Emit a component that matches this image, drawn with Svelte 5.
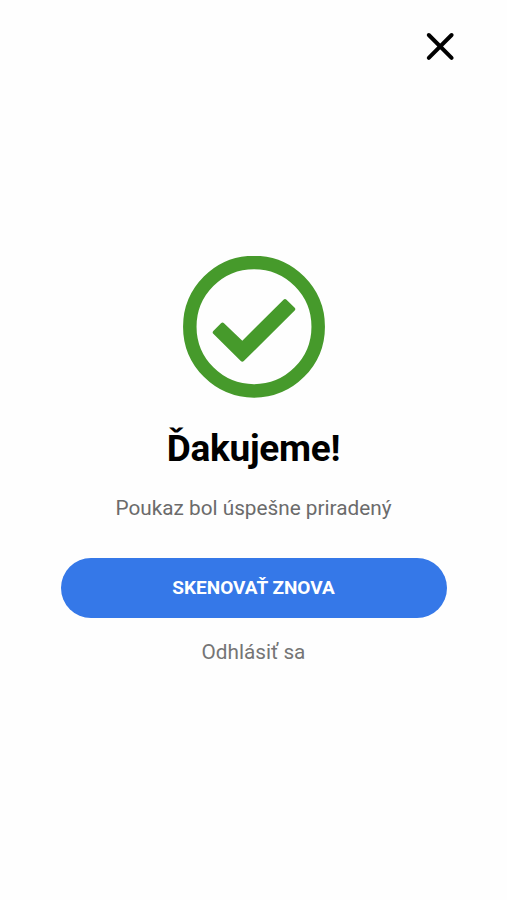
<script>
  export let onClose = () => {}
  export let onScan = () => {}
  export let onLogout = () => {}
</script>

<main>
  <header>
    <button class="close" title="Zavrieť" on:click={onClose}>
      <svg viewBox="0 0 28 28" width="28" height="28">
        <path d="M2.800 3 25.600 25.800M25.600 3 2.800 25.800" />
      </svg>
    </button>
  </header>

  <section>
    <svg class="check" viewBox="0 0 142 142" width="142" height="142">
      <circle cx="71" cy="70.700" r="64.2" />
      <path
        d="M30.300 75 38 67.200Q39.500 65.700 41 67.200L59.300 84.700 100.500 43.800Q102 42.300 103.500 43.800L111.700 51.700Q113 53 111.700 54.500L60.800 105Q59.300 106.300 57.800 105L30.300 77.800Q29 76.400 30.300 75Z"
      />
    </svg>
    <h1>Ďakujeme!</h1>
    <p>Poukaz bol úspešne priradený</p>
    <button class="scan" on:click={onScan}>SKENOVAŤ ZNOVA</button>
    <button class="logout" on:click={onLogout}>Odhlásiť sa</button>
  </section>
</main>

<style>
  :global(body) {
    background: #fefefe;
  }

  main {
    height: 900px;
    font-family: Roboto, sans-serif;
    overflow: hidden;
  }

  header {
    display: flex;
    justify-content: flex-end;
    padding: 32px 53px 0 0;
  }

  button {
    border: 0;
    padding: 0;
    background: none;
    font-family: inherit;
    cursor: pointer;
  }

  .close {
    width: 28px;
    height: 28px;
  }

  .close svg {
    display: block;
    overflow: visible;
  }

  .close path {
    fill: none;
    stroke: #000;
    stroke-width: 4;
    stroke-linecap: round;
  }

  section {
    display: flex;
    flex-direction: column;
    align-items: center;
    margin-top: 196px;
  }

  .check circle {
    fill: none;
    stroke: #469a2b;
    stroke-width: 13.5;
  }

  .check path {
    fill: #469a2b;
  }

  h1 {
    margin: 29px 0 0;
    font-size: 37px;
    line-height: 44px;
    font-weight: 700;
    letter-spacing: -0.25px;
    color: #000;
  }

  p {
    margin: 24px 0 0;
    font-size: 20.75px;
    line-height: 26px;
    color: #6b6b6b;
  }

  .scan {
    width: 386px;
    height: 60px;
    margin-top: 37px;
    padding-bottom: 2px;
    border-radius: 30px;
    background: #3578e8;
    color: #fff;
    font-size: 19px;
    font-weight: 700;
  }

  .logout {
    margin-top: 21px;
    font-size: 20.75px;
    line-height: 26px;
    color: #757575;
  }
</style>
